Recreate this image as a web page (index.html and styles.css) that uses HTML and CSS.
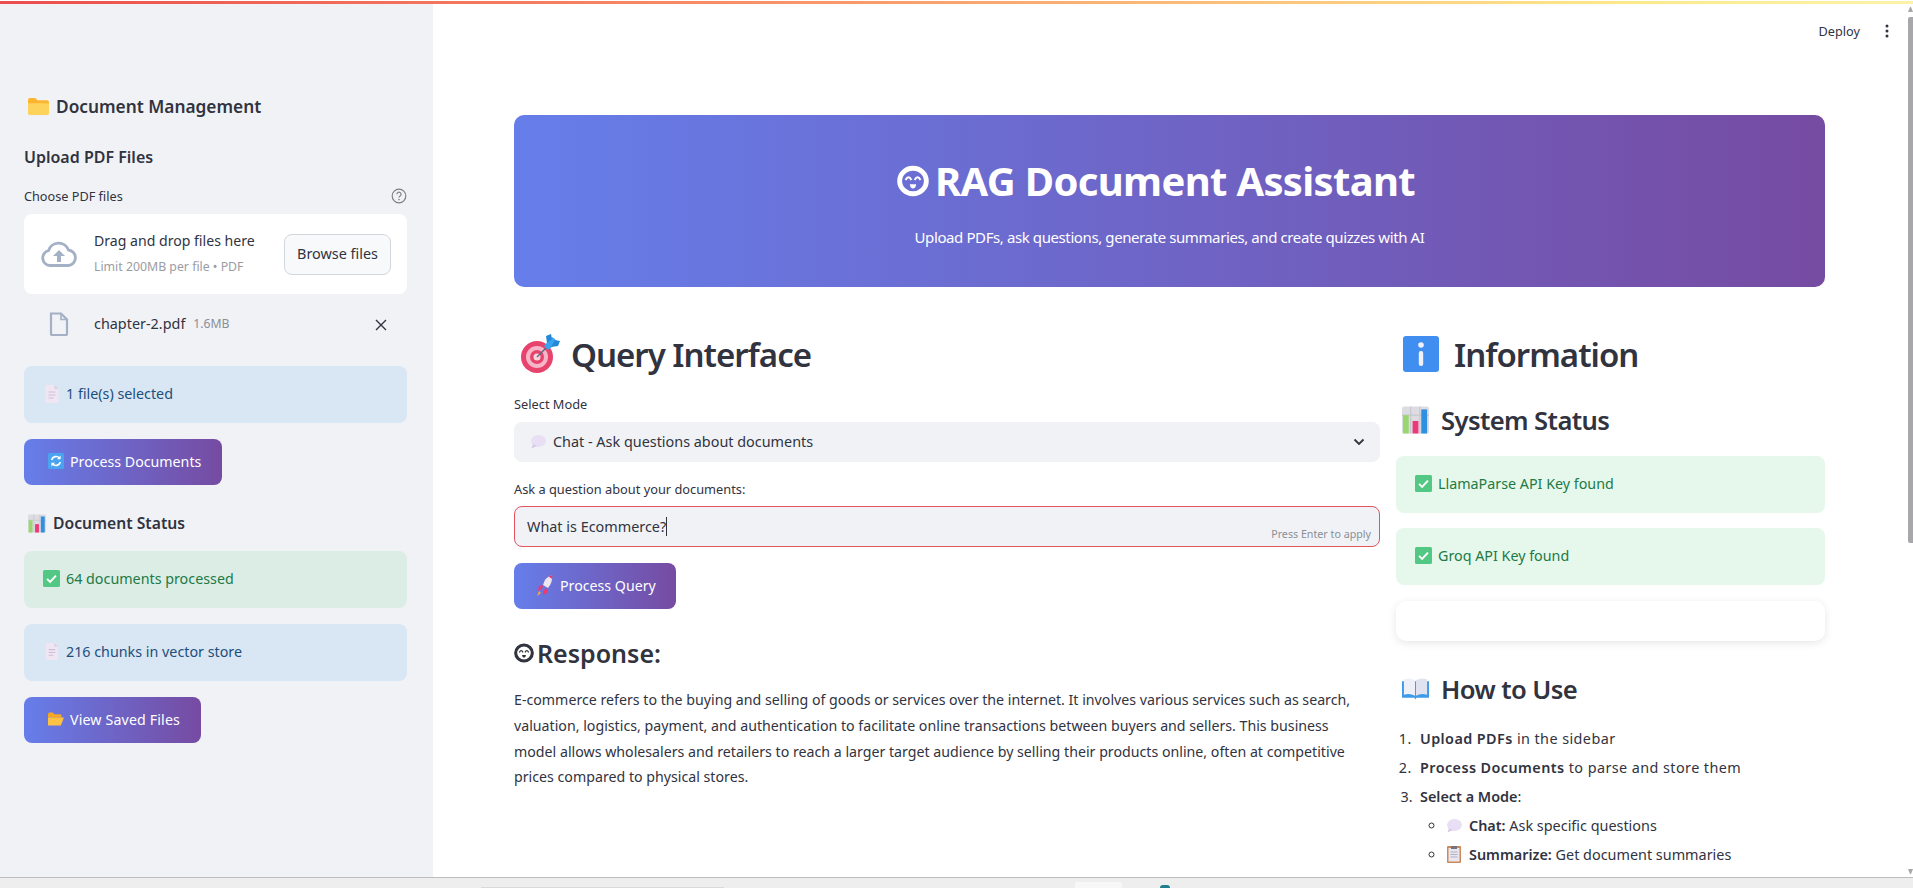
FILE: index.html
```html
<!DOCTYPE html>
<html>
<head>
<meta charset="utf-8">
<title>RAG Document Assistant</title>
<link rel="stylesheet" href="styles.css">
</head>
<body>
<svg class="sprites" width="0" height="0">
<symbol id="i-folder" viewBox="0 0 20 16"><path d="M0 2q0-2 2-2h5l2 2h9q2 0 2 2v10q0 2-2 2H2q-2 0-2-2z" fill="#fdb52f"/><path d="M0 5h20v9q0 2-2 2H2q-2 0-2-2z" fill="#fdd35c"/></symbol>
<symbol id="i-folder-open" viewBox="0 0 20 16"><path d="M0 2q0-2 2-2h4l2 2h7q2 0 2 2v2H0z" fill="#f5a623"/><path d="M0 16V6h15l5 0-4 10z" fill="#fdc143"/></symbol>
<symbol id="i-page" viewBox="0 0 16 18"><path d="M2 0h9l4 4v14H2z" fill="#f0e5f3"/><path d="M11 0l4 4h-4z" fill="#d9d2de"/><path d="M5 7h7M5 10h7M5 13h5" stroke="#cdbfd6" stroke-width="1.2"/></symbol>
<symbol id="i-refresh" viewBox="0 0 16 16"><rect width="16" height="16" rx="1.5" fill="#4aa3f0"/><path d="M3.6 7a4.6 4.6 0 0 1 8-1.8M12.4 9a4.6 4.6 0 0 1-8 1.8" fill="none" stroke="#fff" stroke-width="1.6"/><path d="M12.6 2.6v3.6H9zM3.4 13.4V9.8H7z" fill="#fff"/></symbol>
<symbol id="i-chart" viewBox="0 0 28 28"><rect width="28" height="28" rx="2" fill="#dcdce2"/><path d="M9 0v28M18.500 0v28M0 9h28" stroke="#c3c3cb" stroke-width="1"/><rect x="1" y="9" width="6" height="19" fill="#9bd770"/><rect x="11" y="15" width="6" height="13" fill="#ec3a78"/><rect x="20" y="3" width="6" height="25" fill="#2f8fe0"/></symbol>
<symbol id="i-check" viewBox="0 0 16 16"><rect width="16" height="16" rx="1.500" fill="#52c884"/><path d="M3.800 8.300l2.900 2.900 5.500-6" fill="none" stroke="#fff" stroke-width="1.800"/></symbol>
<symbol id="i-target" viewBox="0 0 40 40"><circle cx="17" cy="23" r="16" fill="#e8436d"/><circle cx="17" cy="23" r="11" fill="#f7b6c8"/><circle cx="17" cy="23" r="7" fill="#e8436d"/><circle cx="17" cy="23" r="3.500" fill="#f7d5de"/><path d="M17 23L30 10" stroke="#5a6a80" stroke-width="1.500"/><path d="M24 12l8-9 3 2 2 4-9 7z" fill="#37a4ee"/><path d="M27 9l-1-7 5-2 1 5zM31 13l7-1 2-5-5-1z" fill="#2488d8"/></symbol>
<symbol id="i-info" viewBox="0 0 36 36"><rect width="36" height="36" rx="3" fill="#3f8ef0"/><circle cx="18" cy="9" r="2.800" fill="#f1f0fb"/><rect x="15.800" y="15" width="4.400" height="15" rx="2" fill="#f1f0fb"/></symbol>
<symbol id="i-book" viewBox="0 0 28 22"><path d="M0 3h28v17H15l-1 2-1-2H0z" fill="#3f9be8"/><path d="M2 1q7-2 11.500 1v16Q8 15 2 17z" fill="#eef0f8"/><path d="M26 1q-7-2-11.500 1v16q5.500-3 11.500-1z" fill="#dfe3f1"/></symbol>
<symbol id="i-bubble" viewBox="0 0 16 14"><ellipse cx="8.500" cy="6" rx="7.500" ry="6" fill="#e8dff4"/><path d="M3 9l-1.500 4.500L7 11z" fill="#d8cbe8"/></symbol>
<symbol id="i-rocket" viewBox="0 0 18 22"><path d="M16 1q1 7-4 13l-5-3q2-8 9-10z" fill="#eee5f0"/><path d="M16 1q.5 2 .2 4l-3.700-2.400Q14 1.500 16 1z" fill="#ea3a6f"/><path d="M7 11l-4 1-1 5 4-2zM12 14l-1 5-4 2 1-5z" fill="#ea3a6f"/><path d="M3 17l2 2-4 3z" fill="#f7a64a"/></symbol>
<symbol id="i-clip" viewBox="0 0 14 17"><rect width="14" height="17" y="0" rx="1" fill="#c98a5c"/><rect x="1.500" y="2" width="11" height="13.500" fill="#e9e6f0"/><rect x="4" y="0" width="6" height="3" fill="#77727f"/><path d="M3.500 6h7M3.500 8.500h7M3.500 11h7" stroke="#b3afc4" stroke-width="1"/></symbol>
<symbol id="i-bot" viewBox="0 0 30 30"><ellipse cx="15" cy="15" rx="12.500" ry="12" fill="none" stroke="currentColor" stroke-width="4.600"/><path d="M8 14q2.800-5 5.500 0M16.500 14q2.800-5 5.500 0" fill="none" stroke="currentColor" stroke-width="1.900"/><path d="M12 18h6q-.5 4-3 4t-3-4z" fill="currentColor"/></symbol>
</svg>

<div class="loader"></div>

<div class="app">
<aside class="sidebar">
<h2 class="side-title"><svg class="emoji folder"><use href="#i-folder"/></svg>Document Management</h2>
<h3 class="side-sub">Upload PDF Files</h3>
<div class="field-label">
<span>Choose PDF files</span>
<svg class="help" viewBox="0 0 16 16"><circle cx="8" cy="8" r="6.800" fill="none" stroke="#7d8089" stroke-width="1.200"/><path d="M5.900 6.300a2.100 2.100 0 1 1 3.200 1.800c-.7.4-1.100.8-1.100 1.500" fill="none" stroke="#7d8089" stroke-width="1.200"/><circle cx="8" cy="11.600" r=".8" fill="#7d8089"/></svg>
</div>
<div class="dropzone">
<svg class="cloud" viewBox="0 0 38 26"><path d="M10 24.500a7.500 7.500 0 0 1-1.500-14.800A10.500 10.500 0 0 1 28.500 9a7.800 7.800 0 0 1 0 15.500z" fill="none" stroke="#a3b0c6" stroke-width="2.800"/><path d="M19 9l6 6h-4v6h-4v-6h-4z" fill="#a3b0c6"/></svg>
<div class="drop-text">
<div class="drop-main">Drag and drop files here</div>
<div class="drop-hint">Limit 200MB per file • PDF</div>
</div>
<button class="browse">Browse files</button>
</div>
<div class="file-row">
<svg class="file-icon" viewBox="0 0 20 24"><path d="M2 1.500h10l6 6V22a1 1 0 0 1-1 1H3a1 1 0 0 1-1-1z" fill="none" stroke="#a3b0c6" stroke-width="2.200"/><path d="M12 1.500v6h6" fill="none" stroke="#a3b0c6" stroke-width="1.600"/></svg>
<span class="file-name">chapter-2.pdf</span><span class="file-size">1.6MB</span>
<svg class="file-x" viewBox="0 0 12 12"><path d="M1 1l10 10M11 1L1 11" stroke="#31333f" stroke-width="1.400"/></svg>
</div>
<div class="note info first-note"><svg class="emoji note-icon"><use href="#i-page"/></svg>1 file(s) selected</div>
<button class="grad-btn side-btn"><svg class="emoji"><use href="#i-refresh"/></svg>Process Documents</button>
<h3 class="side-status"><svg class="emoji"><use href="#i-chart"/></svg>Document Status</h3>
<div class="note ok-side"><svg class="emoji note-icon"><use href="#i-check"/></svg>64 documents processed</div>
<div class="note info"><svg class="emoji note-icon"><use href="#i-page"/></svg>216 chunks in vector store</div>
<button class="grad-btn side-btn view-btn"><svg class="emoji"><use href="#i-folder-open"/></svg>View Saved Files</button>
</aside>

<main class="main">
<div class="toolbar">
<span class="deploy">Deploy</span>
<svg class="kebab" viewBox="0 0 4 14"><circle cx="2" cy="2" r="1.500"/><circle cx="2" cy="7" r="1.500"/><circle cx="2" cy="12" r="1.500"/></svg>
</div>
<section class="hero">
<h1><svg class="emoji hero-bot"><use href="#i-bot"/></svg>RAG Document Assistant</h1>
<p>Upload PDFs, ask questions, generate summaries, and create quizzes with AI</p>
</section>
<div class="cols">
<div class="col-left">
<h2 class="big"><svg class="emoji"><use href="#i-target"/></svg>Query Interface</h2>
<label class="lbl">Select Mode</label>
<div class="select"><svg class="emoji"><use href="#i-bubble"/></svg><span>Chat - Ask questions about documents</span>
<svg class="chev" viewBox="0 0 12 8"><path d="M1.500 1.500L6 6l4.500-4.500" fill="none" stroke="#31333f" stroke-width="1.800"/></svg></div>
<label class="lbl ask">Ask a question about your documents:</label>
<div class="input"><span class="typed">What is Ecommerce?</span><span class="caret"></span><span class="apply">Press Enter to apply</span></div>
<button class="grad-btn query-btn"><svg class="emoji"><use href="#i-rocket"/></svg>Process Query</button>
<h3 class="resp"><svg class="emoji"><use href="#i-bot"/></svg>Response:</h3>
<p class="answer">E-commerce refers to the buying and selling of goods or services over the internet. It involves various services such as search, valuation, logistics, payment, and authentication to facilitate online transactions between buyers and sellers. This business model allows wholesalers and retailers to reach a larger target audience by selling their products online, often at competitive prices compared to physical stores.</p>
</div>
<div class="col-right">
<h2 class="big info-head"><svg class="emoji"><use href="#i-info"/></svg>Information</h2>
<h3 class="mid"><svg class="emoji"><use href="#i-chart"/></svg>System Status</h3>
<div class="note ok"><svg class="emoji note-icon"><use href="#i-check"/></svg>LlamaParse API Key found</div>
<div class="note ok"><svg class="emoji note-icon"><use href="#i-check"/></svg>Groq API Key found</div>
<div class="blank"></div>
<h3 class="mid howto"><svg class="emoji"><use href="#i-book"/></svg>How to Use</h3>
<ol class="steps">
<li class="loose"><b>Upload PDFs</b> in the sidebar</li>
<li class="loose"><b>Process Documents</b> to parse and store them</li>
<li><b>Select a Mode</b>:
<ul>
<li><svg class="emoji"><use href="#i-bubble"/></svg><b>Chat:</b> Ask specific questions</li>
<li><svg class="emoji"><use href="#i-clip"/></svg><b>Summarize:</b> Get document summaries</li>
</ul>
</li>
</ol>
</div>
</div>
</main>

<div class="scrollbar">
<span class="arrow up"></span>
<span class="thumb"></span>
<span class="arrow down"></span>
</div>
</div>

<div class="taskbar">
<span class="tb-tab"></span>
<span class="tb-box"></span>
<span class="tb-dot"></span>
</div>
</body>
</html>
```

FILE: styles.css
```css
*{box-sizing:border-box;}
html,body{height:100%;}
body{margin:0;height:888px;overflow:hidden;background:#fff;color:#31333f;font-family:"Noto Sans",sans-serif;font-size:14.5px;}
h1,h2,h3,p{margin:0;}
.sprites{position:absolute;}
.emoji{display:inline-block;flex:none;}

.loader{height:4px;border-top:1px solid #fff;background:linear-gradient(90deg,#ec4d4d,#f99a6b 45%,#fbe98a 85%,#fdf3a8);}

.app{display:flex;height:873px;overflow:hidden;}

/* sidebar */
.sidebar{width:433px;flex:none;background:#f0f2f6;padding:0 26px 0 24px;}
.side-title{display:flex;align-items:center;margin-top:88px;height:28px;font-size:17.300px;font-weight:600;padding-left:4px;}
.side-title .folder{width:21px;height:17px;margin-right:7px;}
.side-sub{margin-top:25px;height:24px;line-height:24px;font-size:16px;font-weight:600;}
.field-label{display:flex;justify-content:space-between;align-items:center;margin-top:17px;height:20px;font-size:12.700px;}
.help{width:16px;height:16px;}
.dropzone{display:flex;align-items:center;margin-top:8px;height:80px;background:#fff;border-radius:8px;padding:0 16px;}
.cloud{width:38px;height:26px;margin-right:16px;}
.drop-text{flex:1;}
.drop-main{font-size:14.100px;line-height:24px;}
.drop-hint{font-size:12.300px;line-height:24px;color:#9a9ca3;margin-top:2px;}
.browse{width:107px;height:41px;background:#f8f9fb;border:1px solid #d3d6dc;border-radius:8px;color:#31333f;font-family:inherit;font-size:14.400px;padding:0 0 1px;}
.file-row{display:flex;align-items:center;height:48px;margin-top:6px;padding-left:25px;position:relative;}
.file-icon{width:20px;height:24px;margin-right:25px;}
.file-name{font-size:14.400px;position:relative;top:-1px;}
.file-size{font-size:12.200px;color:#8b8e96;margin-left:8px;position:relative;top:-1px;}
.file-x{width:12px;height:12px;margin-left:auto;margin-right:20px;position:relative;top:1px;}

.note{display:flex;align-items:center;height:57px;border-radius:8px;padding:0 0 2px 19px;font-size:14.300px;margin-top:16px;}
.note-icon{width:17px;height:17px;margin-right:6px;}
.info{background:#d9e6f4;color:#1d4f7c;}
.ok-side{background:#dcede5;color:#217a45;}
.ok{background:#e6f8ec;color:#217a45;}
.first-note{margin-top:18px;}
.first-note .note-icon{height:18px;}

.grad-btn{display:flex;align-items:center;height:46px;border:0;border-radius:8px;background:linear-gradient(90deg,#667eea,#764ba2);color:#fff;font-family:inherit;font-size:14.200px;padding:0 21px 2px 24px;}
.grad-btn .emoji{width:16px;height:16px;margin-right:6px;}
.side-btn{margin-top:16px;}
.view-btn{letter-spacing:.15px;}
.side-status{display:flex;align-items:center;margin-top:26px;height:24px;padding-left:4px;font-size:15.700px;font-weight:600;}
.side-status .emoji{width:18px;height:19px;margin-right:7px;}
.side-status + .note{margin-top:16px;}

/* main area */
.main{flex:1;min-width:0;padding:0 83px 0 81px;position:relative;}
.toolbar{display:flex;justify-content:flex-end;align-items:center;height:53px;position:absolute;top:0;right:0;width:100%;padding:0 19px 0 0;}
.deploy{font-size:12.700px;margin-right:25px;}
.kebab{width:4px;height:14px;fill:#31333f;}
.hero{margin-top:111px;height:172px;border-radius:10px;background:linear-gradient(90deg,#667eea,#764ba2);color:#fff;text-align:center;padding-top:38px;}
.hero h1{display:flex;justify-content:center;align-items:center;font-size:40px;letter-spacing:-.66px;line-height:56px;font-weight:700;padding-right:27px;}
.hero-bot{width:32px;height:32px;margin-right:6px;}
.hero p{font-size:15px;letter-spacing:-.4px;line-height:26px;margin-top:15px;}

.cols{display:flex;gap:16px;}
.col-left{flex:0 0 866px;min-width:0;}
.col-right{flex:1;min-width:0;}
.big{display:flex;align-items:center;height:46px;margin-top:44px;font-size:33px;letter-spacing:-1px;font-weight:600;padding-left:6px;}
.big .emoji{width:40px;height:40px;margin-right:11px;}
.info-head{padding-left:7px;}
.info-head .emoji{width:36px;height:36px;margin-right:15px;}
.lbl{display:block;font-size:12.800px;line-height:20px;margin-top:17px;}
.select{display:flex;align-items:center;height:40px;margin-top:8px;background:#f0f2f6;border-radius:8px;padding:0 15px 1px 16px;font-size:14.400px;}
.select .emoji{width:16px;height:14px;margin-right:7px;}
.chev{width:12px;height:8px;margin-left:auto;}
.lbl.ask{margin-top:17px;}
.input{display:flex;align-items:center;height:41px;margin-top:7px;background:#f0f2f6;border:1px solid #e0555f;border-radius:8px;padding:0 12px;font-size:14.400px;position:relative;}
.caret{width:1px;height:19px;background:#31333f;}
.apply{position:absolute;right:8px;bottom:5px;font-size:10.700px;color:#8b8e96;}
.query-btn{margin-top:16px;padding:0 20px 2px 22px;}
.query-btn .emoji{width:18px;height:22px;margin-right:6px;}
.resp{display:flex;align-items:center;margin-top:24px;height:40px;font-size:25px;font-weight:600;}
.resp .emoji{width:20px;height:20px;margin-right:3px;}
.answer{margin-top:14px;font-size:14.200px;line-height:25.800px;padding-right:10px;}

.mid{display:flex;align-items:center;height:36px;font-size:25.600px;letter-spacing:-.6px;font-weight:600;padding-left:6px;margin-top:25px;}
.mid .emoji{width:27px;height:28px;margin-right:12px;}
.col-right .note{margin-top:15px;}
.col-right .mid + .note{margin-top:18px;}
.blank{height:40px;margin-top:16px;border-radius:10px;background:#fff;box-shadow:0 2px 8px rgba(0,0,0,.1);}
.mid.howto{margin-top:30px;}
.howto .emoji{height:22px;}
.steps{margin:17px 0 0;padding-left:24px;font-size:14.400px;line-height:29px;}
.steps > li::marker{content:counter(list-item) ".\00a0\00a0";}
.steps .loose{letter-spacing:.42px;}
.steps b{font-weight:600;}
.steps ul{margin:0;padding-left:26px;list-style:circle;}
.steps ul .emoji{width:16px;height:14px;margin-right:7px;vertical-align:-2px;}
.steps ul li:last-child .emoji{height:17px;vertical-align:-3px;}

/* scrollbar */
.scrollbar{width:5px;flex:none;display:flex;flex-direction:column;background:#fff;}
.arrow{height:0;border-left:2.500px solid transparent;border-right:2.500px solid transparent;}
.arrow.up{border-bottom:5px solid #a8a8ac;margin-top:3px;}
.arrow.down{border-top:5px solid #a8a8ac;margin-bottom:3px;}
.thumb{height:526px;margin-top:5px;background:#a8a8ac;border-radius:2px 0 0 2px;}
.scrollbar .arrow.down{margin-top:auto;}

/* cut off strip at the bottom */
.taskbar{height:11px;background:#eeeeee;border-top:1px solid #bdbdbd;position:relative;}
.tb-tab{position:absolute;left:481px;bottom:0;width:243px;height:1px;background:#d9d9d9;}
.tb-box{position:absolute;left:1075px;bottom:0;width:47px;height:6px;background:#f7f7f7;border-radius:2px 2px 0 0;}
.tb-dot{position:absolute;left:1160px;bottom:0;width:10px;height:3px;background:#1f7f8f;border-radius:3px 3px 0 0;}
```
